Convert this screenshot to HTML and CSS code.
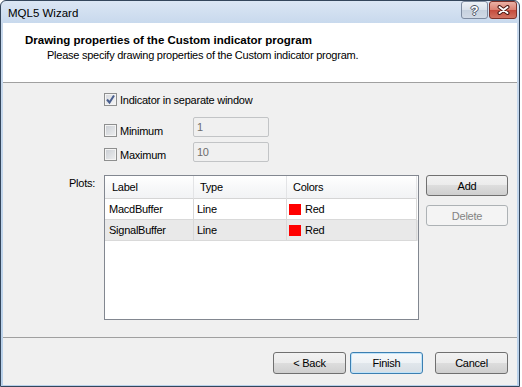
FILE: index.html
```html
<!DOCTYPE html>
<html lang="en">
<head>
  <meta charset="UTF-8" />
  <title>MQL5 Wizard</title>
  <link rel="stylesheet" href="styles.css">
</head>
<body>

  <div class="window">
    <div class="titlebar">
      <span class="title">MQL5 Wizard</span>
      <div class="caption-btns">
        <span class="cap-btn help">?</span>
        <span class="cap-btn close">
          <svg width="13" height="10" viewBox="0 0 13 10">
            <path d="M2.5,2 L10.5,8 M10.5,2 L2.5,8" stroke="#4a1712" stroke-width="4" stroke-linecap="round" />
            <path d="M2.5,2 L10.5,8 M10.5,2 L2.5,8" stroke="#ffffff" stroke-width="2" stroke-linecap="round" />
          </svg>
        </span>
      </div>
    </div>

    <div class="client">
      <div class="header">
        <div class="header-title">Drawing properties of the Custom indicator program</div>
        <div class="header-sub">Please specify drawing properties of the Custom indicator program.</div>
      </div>

      <div class="content">
        <div class="opt-row first">
          <span class="check checked">
            <svg width="11" height="11" viewBox="0 0 11 11">
              <path d="M2,5.5 L4.5,8.5 L9,1.5" fill="none" stroke="#4a5f8e" stroke-width="2" />
            </svg>
          </span>
          <span class="opt-label">Indicator in separate window</span>
        </div>

        <div class="opt-row">
          <div class="opt-check min">
            <span class="check"></span>
            <span class="opt-label fixed">Minimum</span>
          </div>
          <div class="text-input">1</div>
        </div>

        <div class="opt-row">
          <div class="opt-check max">
            <span class="check"></span>
            <span class="opt-label fixed">Maximum</span>
          </div>
          <div class="text-input">10</div>
        </div>

        <div class="plots">
          <div class="plots-label">Plots:</div>
          <div class="list">
            <div class="list-head">
              <span>Label</span>
              <span>Type</span>
              <span>Colors</span>
            </div>
            <div class="list-row">
              <span>MacdBuffer</span>
              <span>Line</span>
              <span class="color-cell"><i class="swatch"></i>Red</span>
            </div>
            <div class="list-row alt">
              <span>SignalBuffer</span>
              <span>Line</span>
              <span class="color-cell"><i class="swatch"></i>Red</span>
            </div>
          </div>
          <div class="side-btns">
            <button class="btn side">Add</button>
            <button class="btn side" disabled>Delete</button>
          </div>
        </div>
      </div>

      <div class="footer">
        <button class="btn wide back">&lt; Back</button>
        <button class="btn wide default">Finish</button>
        <button class="btn wide">Cancel</button>
      </div>
    </div>
  </div>

</body>
</html>
```

FILE: styles.css
```css
body {
  margin: 0;
  width: 522px;
  height: 387px;
  overflow: hidden;
  background: #fff;
  font-family: "Liberation Sans", Arial, sans-serif;
  font-size: 11px;
  letter-spacing: -0.25px;
  color: #000;
}

.window {
  box-sizing: border-box;
  width: 520px;
  height: 387px;
  border: 1px solid #34465c;
  border-radius: 6px 6px 0 0;
  padding: 0 2px 1px;
  background: linear-gradient(#dbe6f4, #c8d9ed 22px, #b9d1ea);
  display: flex;
  flex-direction: column;
}

.titlebar {
  height: 22px;
  display: flex;
  justify-content: space-between;
  align-items: flex-start;
}

.title {
  padding: 6px 0 0 5px;
  font-size: 11.5px;
  line-height: 13px;
  letter-spacing: 0;
}

.caption-btns {
  display: flex;
}

.cap-btn {
  box-sizing: border-box;
  height: 18px;
  border: 1px solid;
  border-radius: 3px;
  display: flex;
  align-items: center;
  justify-content: center;
}

.help {
  width: 27px;
  border-color: #7d8ba0;
  background: linear-gradient(#eef2f7, #d9e1eb 50%, #c6d1de 50%, #d1dae6);
  color: #fff;
  font-weight: bold;
  font-size: 13px;
  letter-spacing: 0;
  text-shadow: 1px 0 #4b5566, -1px 0 #4b5566, 0 1px #4b5566, 0 -1px #4b5566;
}

.close {
  width: 28px;
  margin-left: 1px;
  border-color: #7e3129;
  background: linear-gradient(#eab1a5, #da7f70 50%, #c4493b 50%, #d27463);
}

.client {
  flex: 1;
  background: #f0f0f0;
  display: flex;
  flex-direction: column;
}

.header {
  box-sizing: border-box;
  height: 60px;
  background: #fff;
  border-bottom: 1px solid #a0a0a0;
  padding: 11px 0 0 22px;
}

.header-title {
  font-weight: bold;
  font-size: 11.5px;
  line-height: 13px;
  letter-spacing: 0;
}

.header-sub {
  margin: 2px 0 0 22px;
  line-height: 13px;
}

.content {
  flex: 1;
  padding: 10px 0 0 101px;
}

.opt-row {
  display: flex;
  align-items: flex-start;
  height: 20px;
  margin-bottom: 5px;
}

.opt-row.first {
  height: 13px;
  margin-bottom: 11px;
}

.opt-check {
  display: flex;
  align-items: flex-start;
}

.opt-check.min {
  margin-top: 7px;
}

.opt-check.max {
  margin-top: 6px;
}

.check {
  box-sizing: border-box;
  width: 13px;
  height: 13px;
  border: 1px solid #8e8f8f;
  background: linear-gradient(135deg, #c9cdd3, #eeeff0);
  box-shadow: inset 0 0 0 1px #f4f4f4;
  display: flex;
  align-items: center;
  justify-content: center;
}

.check.checked {
  background: linear-gradient(135deg, #d5d8dd, #f7f7f7);
}

.opt-label {
  margin-left: 3px;
  padding-top: 1px;
  line-height: 13px;
}

.opt-label.fixed {
  width: 73px;
}

.text-input {
  box-sizing: border-box;
  width: 76px;
  height: 20px;
  border: 1px solid #c2c4c6;
  border-radius: 2px;
  background: #f0f0f0;
  color: #6d6d6d;
  padding: 3px 0 0 3px;
  line-height: 13px;
}

.plots {
  display: flex;
  align-items: flex-start;
  margin: 13px 0 0 -35px;
}

.plots-label {
  width: 35px;
  padding-top: 2px;
  line-height: 13px;
}

.list {
  box-sizing: border-box;
  width: 315px;
  height: 145px;
  border: 1px solid #828790;
  background: #fff;
}

.list-head,
.list-row {
  display: grid;
  grid-template-columns: 89px 93px 130px;
}

.list-head {
  height: 23px;
  background: linear-gradient(#ffffff, #f7f8f9 50%, #f1f2f4);
}

.list-head span {
  border-right: 1px solid #e3e4e6;
  border-bottom: 1px solid #d5d5d5;
  padding: 1px 0 0 6px;
  line-height: 21px;
}

.list-head span:first-child {
  padding-left: 7px;
}

.list-row span {
  height: 21px;
  box-sizing: border-box;
  border-right: 1px solid #d9d9d9;
  border-bottom: 1px solid #d9d9d9;
  padding: 1px 0 0 3px;
  line-height: 19px;
}

.list-row span:first-child {
  padding-left: 4px;
}

.list-row.alt {
  background: #e9e9e9;
}

.list-row .color-cell {
  display: flex;
  align-items: center;
  padding: 0 0 0 2px;
}

.swatch {
  width: 12px;
  height: 11px;
  background: #ff0000;
  margin-right: 4px;
}

.side-btns {
  display: flex;
  flex-direction: column;
  gap: 9px;
  margin-left: 7px;
}

.btn {
  box-sizing: border-box;
  height: 21px;
  padding: 0;
  border: 1px solid #707070;
  border-radius: 3px;
  background: linear-gradient(#f2f2f2, #ebebeb 50%, #dddddd 50%, #cfcfcf);
  font-family: inherit;
  font-size: 11px;
  letter-spacing: -0.25px;
  color: #000;
}

.btn.side {
  width: 82px;
}

.btn:disabled {
  border-color: #adb2b5;
  background: #f4f4f4;
  color: #838383;
}

.footer {
  box-sizing: border-box;
  height: 48px;
  border-top: 1px solid #a0a0a0;
  padding: 14px 9px 0 0;
  display: flex;
  justify-content: flex-end;
  align-items: flex-start;
}

.btn.wide {
  width: 73px;
  height: 22px;
}

.btn.back {
  margin-right: 4px;
}

.btn.default {
  margin-right: 12px;
  border-color: #3c7fb1;
  box-shadow: inset 0 0 0 1px #bfe3f9;
  background: linear-gradient(#f6f9fb, #eef2f5 50%, #e1e7ec 50%, #d7dee4);
}
```
